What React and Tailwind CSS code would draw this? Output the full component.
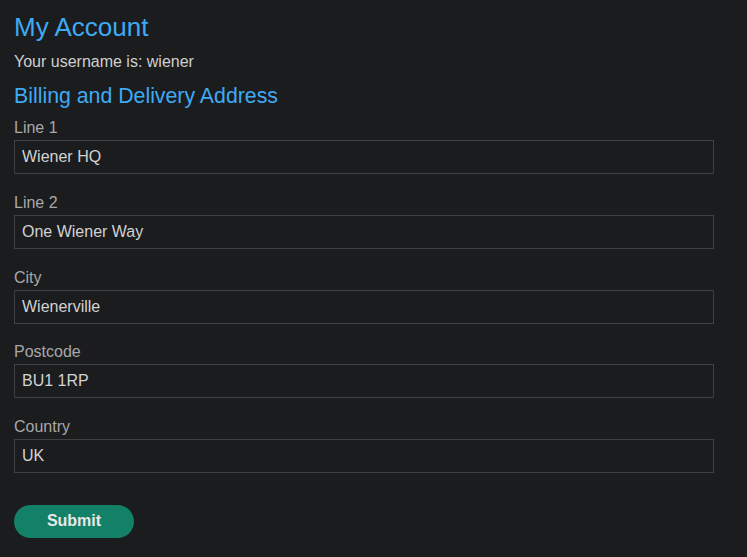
import React from 'react';

const fields = [
  { label: 'Line 1', value: 'Wiener HQ' },
  { label: 'Line 2', value: 'One Wiener Way' },
  { label: 'City', value: 'Wienerville' },
  { label: 'Postcode', value: 'BU1 1RP' },
  { label: 'Country', value: 'UK' },
];

export default function App() {
  return (
    <div className="w-full min-h-screen bg-[#1b1c1e] text-[#cfcfcf] px-[14px] pt-[12px] font-['Liberation_Sans',Arial,sans-serif]">
      <h1 className="text-[26px] leading-[30px] text-[#3eaaf5]">My Account</h1>
      <p className="mt-[10px] text-[16px] leading-[20px]">Your username is: wiener</p>
      <h2 className="mt-[11px] text-[21.3px] leading-[26px] text-[#3eaaf5]">Billing and Delivery Address</h2>
      <form className="mt-[9px]" onSubmit={e => e.preventDefault()}>
        {fields.map(f => (
          <div key={f.label} className="mb-[18.75px]">
            <label className="block mt-[2px] text-[16px] leading-[20px] text-[#a8a8a8]">{f.label}</label>
            <input
              defaultValue={f.value}
              className="block mt-[2px] w-[700px] h-[34px] px-[7px] bg-[#1b1c1e] border border-[#3f4042] text-[16px] text-[#d2d2d2] outline-none"
            />
          </div>
        ))}
        <button
          type="submit"
          className="mt-[13px] w-[120px] h-[33px] rounded-full bg-[#138068] text-[16px] font-bold text-[#e8e8e8]"
        >
          Submit
        </button>
      </form>
    </div>
  );
}
